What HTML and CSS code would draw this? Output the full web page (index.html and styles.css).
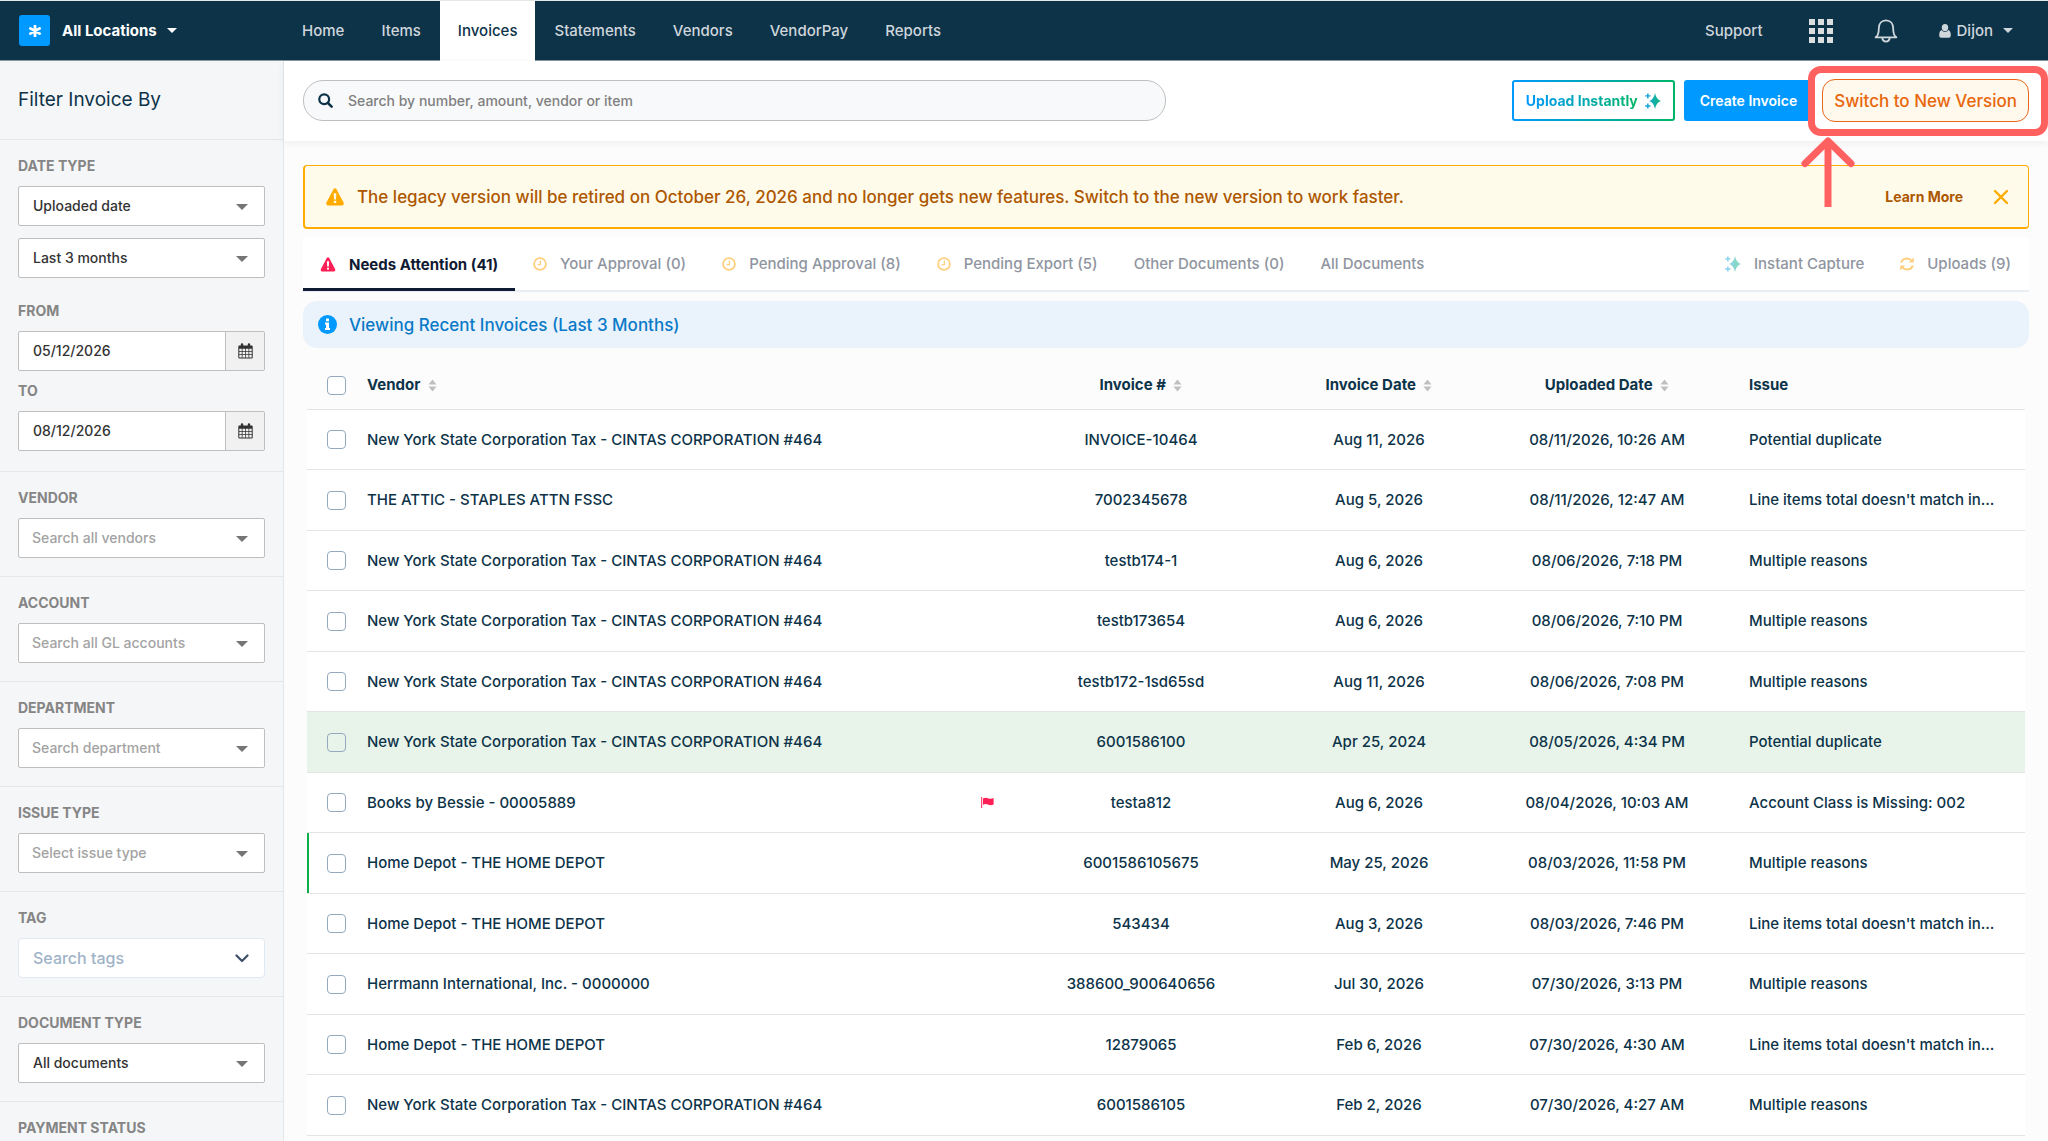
FILE: index.html
```html
<!DOCTYPE html>
<html lang="en">
<head>
<meta charset="UTF-8" />
<meta name="viewport" content="width=device-width, initial-scale=1" />
<title>Invoices</title>
<link rel="stylesheet" href="styles.css">
</head>
<body>

<!-- Shared icons -->
<svg class="sprite" aria-hidden="true">
  <defs>
    <linearGradient id="spark" x1="0" y1="0" x2="16" y2="0" gradientUnits="userSpaceOnUse">
      <stop offset="0" stop-color="#1a9df0" />
      <stop offset="0.55" stop-color="#12b0a8" />
      <stop offset="1" stop-color="#10b07c" />
    </linearGradient>
  </defs>
  <symbol id="i-sparkles" viewBox="0 0 16 16">
    <path fill="url(#spark)" d="M10 0Q11.2 6.4 16 8Q11.2 9.6 10 16Q8.8 9.6 4.2 8Q8.8 6.4 10 0ZM2.1 0.4h1.5v1.8h1.9v1.4H3.6v1.9H2.1V3.6H0.2V2.2h1.9zM2.1 10.4h1.5v1.9h1.9v1.4H3.6v1.9H2.1v-1.9H0.2v-1.4h1.9z" />
    <path fill="url(#spark)" d="M10 3L13.2 8L10 13L6.8 8Z" />
  </symbol>
  <symbol id="i-warning" viewBox="0 0 18 18">
    <path fill="currentColor" fill-rule="evenodd" d="M7.5 1.2Q9 -0.6 10.5 1.2L17.6 14.6Q18.4 17 16.2 17.4H1.8Q-0.4 17 0.4 14.6ZM7.7 5.2L8 11.4H10L10.3 5.2ZM7.8 12.8V15H10.2V12.8Z" />
  </symbol>
  <symbol id="i-clock" viewBox="0 0 14 14">
    <circle cx="7" cy="7" r="5.9" fill="none" stroke="currentColor" stroke-width="1.8" />
    <path d="M7.4 3.6V7.6H4.6" fill="none" stroke="currentColor" stroke-width="1.3" />
  </symbol>
  <symbol id="i-calendar" viewBox="0 0 16 17">
    <path fill="currentColor" fill-rule="evenodd" d="M1.5 2.5H3V1.5Q3 0.3 4.3 0.3T5.6 1.5V2.5H10.4V1.5Q10.4 0.3 11.7 0.3T13 1.5V2.5H14.5Q15.7 2.5 15.7 3.7V15.3Q15.7 16.5 14.5 16.5H1.5Q0.3 16.5 0.3 15.3V3.7Q0.3 2.5 1.5 2.5ZM1.4 6V8.5H4V6ZM4.8 6V8.5H7.6V6ZM8.4 6V8.5H11.2V6ZM12 6V8.5H14.6V6ZM1.4 9.3V12H4V9.3ZM4.8 9.3V12H7.6V9.3ZM8.4 9.3V12H11.2V9.3ZM12 9.3V12H14.6V9.3ZM1.4 12.8V15.4H4V12.8ZM4.8 12.8V15.4H7.6V12.8ZM8.4 12.8V15.4H11.2V12.8ZM12 12.8V15.4H14.6V12.8Z" />
  </symbol>
  <symbol id="i-sort" viewBox="0 0 9 13">
    <path fill="currentColor" d="M4.5 0.5L8.5 5.5H0.5ZM0.5 7.5H8.5L4.5 12.5Z" />
  </symbol>
</svg>

<div class="app">
  <header class="topbar">
    <div class="brand">
      <span class="logo">
        <svg width="12" height="12" viewBox="0 0 12 12"><path d="M6 1V11M1.4 3.4L10.6 8.6M1.4 8.6L10.6 3.4" stroke="#fff" stroke-width="2.8" stroke-linecap="round" /></svg>
      </span>
      <button class="location" type="button">All Locations <i class="caret"></i></button>
    </div>
    <nav class="nav">
      <a href="#">Home</a>
      <a href="#">Items</a>
      <a href="#" class="active">Invoices</a>
      <a href="#">Statements</a>
      <a href="#">Vendors</a>
      <a href="#">VendorPay</a>
      <a href="#">Reports</a>
    </nav>
    <div class="tools">
      <a href="#">Support</a>
      <button type="button" aria-label="Apps">
        <svg width="24" height="24" viewBox="0 0 24 24" fill="#dcdfdf"><path d="M0 0h6v6H0zM9 0h6v6H9zM18 0h6v6h-6zM0 9h6v6H0zM9 9h6v6H9zM18 9h6v6h-6zM0 18h6v6H0zM9 18h6v6H9zM18 18h6v6h-6z" /></svg>
      </button>
      <button type="button" aria-label="Notifications">
        <svg width="24" height="24" viewBox="0 0 24 24" fill="none" stroke="#cfd6dc" stroke-width="1.8"><path d="M1.6 18.4C4.4 16.8 4.8 13.6 4.8 9.6C4.8 4.6 7.6 1.4 12 1.4S19.2 4.6 19.2 9.6C19.2 13.6 19.6 16.8 22.4 18.4Z" stroke-linejoin="round" /><path d="M8.2 19Q9 22.6 12 22.6T15.8 19" /></svg>
      </button>
      <button class="user" type="button">
        <svg width="12" height="14" viewBox="0 0 12 14" fill="currentColor"><ellipse cx="6" cy="3.6" rx="3.2" ry="3.6" /><path d="M2.6 6Q4 8 6 8T9.4 6Q11.8 6.8 11.8 11.4Q11.8 13.8 9.8 13.8H2.2Q0.2 13.8 0.2 11.4Q0.2 6.8 2.6 6Z" /></svg>
        Dijon <i class="caret"></i>
      </button>
    </div>
  </header>

  <aside class="sidebar">
    <h2>Filter Invoice By</h2>

    <section>
      <label for="date-type">Date type</label>
      <div class="select"><select id="date-type"><option>Uploaded date</option></select></div>
      <div class="select range"><select aria-label="Date range"><option>Last 3 months</option></select></div>
      <label for="date-from" class="from">From</label>
      <div class="date">
        <input type="text" id="date-from" value="05/12/2026">
        <button type="button" aria-label="Pick from date"><svg width="15" height="16"><use href="#i-calendar" /></svg></button>
      </div>
      <label for="date-to" class="to">To</label>
      <div class="date">
        <input type="text" id="date-to" value="08/12/2026">
        <button type="button" aria-label="Pick to date"><svg width="15" height="16"><use href="#i-calendar" /></svg></button>
      </div>
    </section>

    <section>
      <label for="vendor">Vendor</label>
      <div class="select empty"><select id="vendor"><option>Search all vendors</option></select></div>
    </section>
    <section>
      <label for="account">Account</label>
      <div class="select empty"><select id="account"><option>Search all GL accounts</option></select></div>
    </section>
    <section>
      <label for="department">Department</label>
      <div class="select empty"><select id="department"><option>Search department</option></select></div>
    </section>
    <section>
      <label for="issue-type">Issue type</label>
      <div class="select empty"><select id="issue-type"><option>Select issue type</option></select></div>
    </section>
    <section>
      <label for="tag">Tag</label>
      <div class="select tags">
        <select id="tag"><option>Search tags</option></select>
        <svg width="14" height="9" viewBox="0 0 14 9"><path d="M1.5 1.5L7 7L12.5 1.5" fill="none" stroke="#3d4f68" stroke-width="2.2" stroke-linecap="round" stroke-linejoin="round" /></svg>
      </div>
    </section>
    <section>
      <label for="doc-type">Document type</label>
      <div class="select"><select id="doc-type"><option>All documents</option></select></div>
    </section>
    <section>
      <label for="pay-status">Payment status</label>
      <div class="select"><select id="pay-status"><option></option></select></div>
    </section>
  </aside>

  <main>
    <div class="actions">
      <div class="search">
        <svg width="15" height="15" viewBox="0 0 15 15" fill="none" stroke="#0d3349" stroke-width="2.2"><circle cx="6.2" cy="6.2" r="4.9" /><path d="M9.8 9.8L13.6 13.6" stroke-linecap="round" stroke-width="2.6" /></svg>
        <input type="text" placeholder="Search by number, amount, vendor or item" aria-label="Search invoices">
      </div>
      <button class="btn upload" type="button"><span>Upload Instantly</span> <svg width="16" height="16"><use href="#i-sparkles" /></svg></button>
      <button class="btn create" type="button">Create Invoice</button>
      <div class="switch">
        <button type="button">Switch to New Version</button>
        <div class="callout"></div>
        <svg class="arrow" width="54" height="72" viewBox="0 0 54 72" fill="none" stroke="#ff6060" stroke-width="7"><path d="M27 5V71" /><path d="M4 27.5L27 5L50 27.5" stroke-linecap="round" stroke-linejoin="round" /></svg>
      </div>
    </div>

    <div class="content">
      <div class="banner">
        <svg width="18" height="18"><use href="#i-warning" /></svg>
        <p>The legacy version will be retired on October 26, 2026 and no longer gets new features. Switch to the new version to work faster.</p>
        <a href="#">Learn More</a>
        <button type="button" aria-label="Dismiss">
          <svg width="16" height="16" viewBox="0 0 16 16"><path d="M2 2L14 14M14 2L2 14" stroke="#ffab00" stroke-width="2.4" stroke-linecap="round" /></svg>
        </button>
      </div>

      <nav class="tabs">
        <a href="#" class="active"><svg class="red" width="16" height="15"><use href="#i-warning" /></svg>Needs Attention (41)</a>
        <a href="#"><svg width="14" height="14"><use href="#i-clock" /></svg>Your Approval (0)</a>
        <a href="#"><svg width="14" height="14"><use href="#i-clock" /></svg>Pending Approval (8)</a>
        <a href="#"><svg width="14" height="14"><use href="#i-clock" /></svg>Pending Export (5)</a>
        <a href="#">Other Documents (0)</a>
        <a href="#">All Documents</a>
        <a href="#" class="right"><svg class="faded" width="16" height="16"><use href="#i-sparkles" /></svg>Instant Capture</a>
        <a href="#"><svg width="14" height="14" viewBox="0 0 14 14" fill="none" stroke="currentColor" stroke-width="2"><path d="M1.2 5.6C2 3 4.2 1.4 6.9 1.4Q9.6 1.4 11.6 3.6M12.8 8.4C12 11 9.8 12.6 7.1 12.6Q4.4 12.6 2.4 10.4" /><path d="M13.8 0.6V5.6H8.8ZM0.2 13.4V8.4H5.2Z" fill="currentColor" stroke="none" /></svg>Uploads (9)</a>
      </nav>

      <div class="info">
        <svg width="19" height="19" viewBox="0 0 19 19"><circle cx="9.5" cy="9.5" r="9.5" fill="#0099ff" /><path d="M8 3.6H11V6.2H8ZM7 7.6H11V13H12V15H7V13H8V9.6H7Z" fill="#fff" /></svg>
        Viewing Recent Invoices (Last 3 Months)
      </div>

      <table>
        <colgroup>
          <col class="c-check"><col><col class="c-flag"><col class="c-number"><col class="c-date"><col class="c-uploaded"><col class="c-issue">
        </colgroup>
        <thead>
          <tr>
            <th><input type="checkbox" aria-label="Select all"></th>
            <th class="left">Vendor <svg width="9" height="13"><use href="#i-sort" /></svg></th>
            <th></th>
            <th>Invoice # <svg width="9" height="13"><use href="#i-sort" /></svg></th>
            <th>Invoice Date <svg width="9" height="13"><use href="#i-sort" /></svg></th>
            <th>Uploaded Date <svg width="9" height="13"><use href="#i-sort" /></svg></th>
            <th class="issue">Issue</th>
          </tr>
        </thead>
        <tbody id="rows"></tbody>
      </table>
    </div>
  </main>
</div>

<script>
  const cintas = 'New York State Corporation Tax - CINTAS CORPORATION #464';
  const depot = 'Home Depot - THE HOME DEPOT';
  const noMatch = "Line items total doesn't match in...";

  const invoices = [
    { vendor: cintas, number: 'INVOICE-10464', date: 'Aug 11, 2026', uploaded: '08/11/2026, 10:26 AM', issue: 'Potential duplicate' },
    { vendor: 'THE ATTIC - STAPLES ATTN FSSC', number: '7002345678', date: 'Aug 5, 2026', uploaded: '08/11/2026, 12:47 AM', issue: noMatch },
    { vendor: cintas, number: 'testb174-1', date: 'Aug 6, 2026', uploaded: '08/06/2026, 7:18 PM', issue: 'Multiple reasons' },
    { vendor: cintas, number: 'testb173654', date: 'Aug 6, 2026', uploaded: '08/06/2026, 7:10 PM', issue: 'Multiple reasons' },
    { vendor: cintas, number: 'testb172-1sd65sd', date: 'Aug 11, 2026', uploaded: '08/06/2026, 7:08 PM', issue: 'Multiple reasons' },
    { vendor: cintas, number: '6001586100', date: 'Apr 25, 2024', uploaded: '08/05/2026, 4:34 PM', issue: 'Potential duplicate', state: 'highlight' },
    { vendor: 'Books by Bessie - 00005889', number: 'testa812', date: 'Aug 6, 2026', uploaded: '08/04/2026, 10:03 AM', issue: 'Account Class is Missing: 002', flag: true },
    { vendor: depot, number: '6001586105675', date: 'May 25, 2026', uploaded: '08/03/2026, 11:58 PM', issue: 'Multiple reasons', state: 'marked' },
    { vendor: depot, number: '543434', date: 'Aug 3, 2026', uploaded: '08/03/2026, 7:46 PM', issue: noMatch },
    { vendor: 'Herrmann International, Inc. - 0000000', number: '388600_900640656', date: 'Jul 30, 2026', uploaded: '07/30/2026, 3:13 PM', issue: 'Multiple reasons' },
    { vendor: depot, number: '12879065', date: 'Feb 6, 2026', uploaded: '07/30/2026, 4:30 AM', issue: noMatch },
    { vendor: cintas, number: '6001586105', date: 'Feb 2, 2026', uploaded: '07/30/2026, 4:27 AM', issue: 'Multiple reasons' }
  ];

  const flag = '<svg width="13" height="11" viewBox="0 0 13 11" fill="#ff1f57"><path d="M0.2 0H1.2V11H0.2ZM2 1.4Q4.4 0 7 1.2T12.6 1V7.4Q9.6 8.8 7 7.6T2 7.8Z" /></svg>';

  // Fill the invoice table
  document.getElementById('rows').innerHTML = invoices.map(inv => `
    <tr class="${inv.state || ''}">
      <td><input type="checkbox" aria-label="Select invoice ${inv.number}"></td>
      <td class="left">${inv.vendor}</td>
      <td>${inv.flag ? flag : ''}</td>
      <td>${inv.number}</td>
      <td>${inv.date}</td>
      <td>${inv.uploaded}</td>
      <td class="issue">${inv.issue}</td>
    </tr>`).join('');
</script>

</body>
</html>
```
FILE: styles.css
```css
* {
  box-sizing: border-box;
}
body {
  margin: 0;
  background: #fcfcfc;
  color: #0d3349;
  font-family: Inter, "Liberation Sans", sans-serif;
  font-size: 15px;
  font-weight: 500;
  line-height: 20px;
}
button, input, select {
  font: inherit;
  color: inherit;
}
button {
  padding: 0;
  border: 0;
  background: none;
  cursor: pointer;
}
a {
  color: inherit;
  text-decoration: none;
}
svg {
  flex: none;
}
.sprite {
  position: absolute;
  width: 0;
  height: 0;
}
.caret {
  border: 5px solid transparent;
  border-top-color: currentColor;
  border-bottom: 0;
}
.app {
  display: grid;
  grid-template-columns: 284px 1fr;
  grid-template-rows: auto 1fr;
  height: 100vh;
  overflow: hidden;
}

/* Top bar */
.topbar {
  grid-column: 1 / -1;
  display: grid;
  grid-template-columns: 284px 1fr auto;
  height: 61px;
  background: #0d3349;
  border-top: 1px solid #e3e8e4;
  color: #cfd6dc;
}
.brand {
  display: flex;
  align-items: center;
  gap: 12px;
  padding-left: 19px;
  border-bottom: 1px solid #8698a4;
}
.logo {
  display: grid;
  place-items: center;
  width: 31px;
  height: 31px;
  border-radius: 3px;
  background: #0099ff;
}
.location {
  display: flex;
  align-items: center;
  gap: 10px;
  color: #fff;
  font-weight: 700;
}
.nav {
  display: flex;
  gap: 1px;
  border-bottom: 1px solid #8698a4;
}
.nav a {
  display: flex;
  align-items: center;
  padding: 0 18px;
}
.nav .active {
  margin-bottom: -1px;
  background: #fff;
  color: #0d3349;
}
.tools {
  display: flex;
  align-items: center;
  gap: 41px;
  padding-right: 35px;
  border-bottom: 1px solid #8698a4;
}
.tools a {
  margin-right: 5px;
}
.tools svg {
  display: block;
}
.user {
  display: flex;
  align-items: center;
  gap: 6px;
}
.user .caret {
  margin-left: 4px;
}

/* Filters */
.sidebar {
  overflow: hidden;
  background: #f5f6f8;
  border-right: 1px solid #e4e7ea;
}
.sidebar h2 {
  margin: 0;
  padding: 27px 18px;
  font-size: 19px;
  font-weight: 400;
  line-height: 24px;
}
.sidebar section {
  padding: 16px 18px 18px;
  border-top: 1px solid #e4e7ea;
}
.sidebar section:first-of-type {
  padding-bottom: 20px;
}
.sidebar label {
  display: block;
  margin-bottom: 10px;
  color: #858585;
  font-size: 14px;
  font-weight: 700;
  text-transform: uppercase;
}
.sidebar .from {
  margin-top: 23px;
}
.sidebar .to {
  margin-top: 10px;
}
.select {
  position: relative;
}
.select.range {
  margin-top: 12px;
}
.select select {
  display: block;
  width: 100%;
  height: 40px;
  padding: 0 14px;
  border: 1px solid #bfbfbf;
  border-radius: 2px;
  background: #fff;
  color: #333;
  font-size: 14px;
  appearance: none;
}
.select.empty select {
  padding: 0 13px;
  color: #a3a3a3;
}
.select::after {
  content: "";
  position: absolute;
  top: 18px;
  right: 17px;
  border: 6px solid transparent;
  border-top-color: #757575;
  border-bottom: 0;
}
.select.tags select {
  border-color: #e0e8f1;
  border-radius: 4px;
  color: #9fb3c8;
  font-size: 16px;
}
.select.tags::after {
  content: none;
}
.select.tags svg {
  position: absolute;
  top: 16px;
  right: 16px;
}
.date {
  display: flex;
  height: 40px;
  border: 1px solid #bfbfbf;
  border-radius: 2px;
  background: #fff;
}
.date input {
  flex: 1;
  min-width: 0;
  padding: 0 14px;
  border: 0;
  background: none;
  color: #333;
  font-size: 14px;
}
.date button {
  display: grid;
  place-items: center;
  width: 39px;
  border-left: 1px solid #bfbfbf;
  background: #f1f1f1;
  color: #333;
}

/* Search and actions */
main {
  min-width: 0;
}
.actions {
  display: flex;
  align-items: center;
  gap: 9px;
  height: 80px;
  padding: 0 19px 1px;
  background: #fff;
  box-shadow: 0 2px 8px rgba(0, 0, 0, 0.06);
}
.search {
  display: flex;
  align-items: center;
  gap: 15px;
  flex: 0 0 50%;
  height: 41px;
  margin-right: auto;
  padding: 0 14px;
  border: 1px solid #bfbfbf;
  border-radius: 20px;
  background: #f8f9fa;
}
.search input {
  flex: 1;
  padding: 0;
  border: 0;
  outline: 0;
  background: none;
  font-size: 14px;
}
.search input::placeholder {
  color: #808080;
}
.btn {
  display: flex;
  align-items: center;
  gap: 7px;
  height: 41px;
  padding: 0 16px;
  border-radius: 3px;
  font-size: 14px;
  font-weight: 600;
}
.upload {
  padding: 0 12px;
  border: 2px solid transparent;
  background: linear-gradient(#fff, #fff) padding-box, linear-gradient(90deg, #0099ff, #00b567) border-box;
  font-weight: 700;
}
.upload span {
  background: linear-gradient(90deg, #0099ff, #00b567);
  background-clip: text;
  color: transparent;
}
.create {
  background: #0099ff;
  color: #fff;
}
.switch {
  position: relative;
}
.switch button {
  height: 43px;
  padding: 0 11px;
  border: 1px solid #e8671b;
  border-radius: 13px;
  background: #fff8ec;
  color: #e8670c;
  font-size: 17px;
  font-weight: 500;
}
/* Highlight drawn over the switch button */
.callout {
  position: absolute;
  inset: -13px -19px -14px -14px;
  border: 7px solid #ff6060;
  border-radius: 13px;
  pointer-events: none;
}
.arrow {
  position: absolute;
  top: 57px;
  left: -21px;
  z-index: 1;
}

/* Content */
.content {
  padding: 24px 19px 0;
}
.banner {
  display: flex;
  align-items: center;
  height: 64px;
  padding: 0 19px 0 21px;
  border: 1px solid #ffab00;
  border-left-width: 2px;
  border-bottom-width: 2px;
  border-radius: 4px;
  background: #fffbea;
  color: #ad5700;
}
.banner > svg {
  color: #ffab00;
}
.banner p {
  flex: 1;
  margin: 0 0 0 13px;
  font-size: 17px;
}
.banner a {
  font-size: 14px;
  font-weight: 700;
}
.banner button {
  display: flex;
  margin-left: 30px;
}
.tabs {
  display: flex;
  height: 54px;
  margin-top: 9px;
  border-bottom: 2px solid #e8eef4;
  background: #fff;
}
.tabs a {
  display: flex;
  align-items: center;
  gap: 13px;
  padding: 0 18px;
  color: #8f95a0;
}
.tabs .active {
  height: 53px;
  padding: 3px 17px 0;
  border-bottom: 3px solid #0f1a33;
  color: #0f1a33;
  font-weight: 700;
}
.tabs svg {
  color: #ffcf80;
}
.tabs .red {
  color: #ff1f57;
}
.tabs .faded {
  opacity: 0.5;
}
.tabs .right {
  margin-left: auto;
}
.info {
  display: flex;
  align-items: center;
  gap: 12px;
  height: 47px;
  margin-top: 9px;
  padding: 0 15px;
  border-radius: 14px;
  background: #eaf3fb;
  color: #0a7ac8;
  font-size: 17px;
}
.content table {
  width: calc(100% - 8px);
  margin: 13px 4px 0;
  border-collapse: separate;
  border-spacing: 0;
  table-layout: fixed;
}
.c-check { width: 60px; }
.c-flag { width: 36px; }
.c-number { width: 272px; }
.c-date { width: 204px; }
.c-uploaded { width: 252px; }
.c-issue { width: 292px; }
th, td {
  height: 60px;
  padding: 0;
  border-bottom: 1px solid #e4e4e4;
  text-align: center;
  white-space: nowrap;
}
th {
  height: 49px;
  font-weight: 700;
}
th svg {
  margin-left: 4px;
  color: #bfbfbf;
  vertical-align: -2px;
}
td {
  background: #fff;
}
tr:nth-child(even) td {
  height: 61px;
}
.left {
  text-align: left;
}
.issue {
  padding-left: 16px;
  text-align: left;
}
.highlight td {
  background: #e8f4ea;
}
.marked td:first-child {
  box-shadow: inset 2px 0 #0cb04a;
}
table input {
  display: block;
  width: 19px;
  height: 19px;
  margin: 0 0 0 20px;
  border: 1px solid #94a9be;
  border-radius: 4px;
  background: #fff;
  appearance: none;
}
.highlight input {
  background: none;
}
```
